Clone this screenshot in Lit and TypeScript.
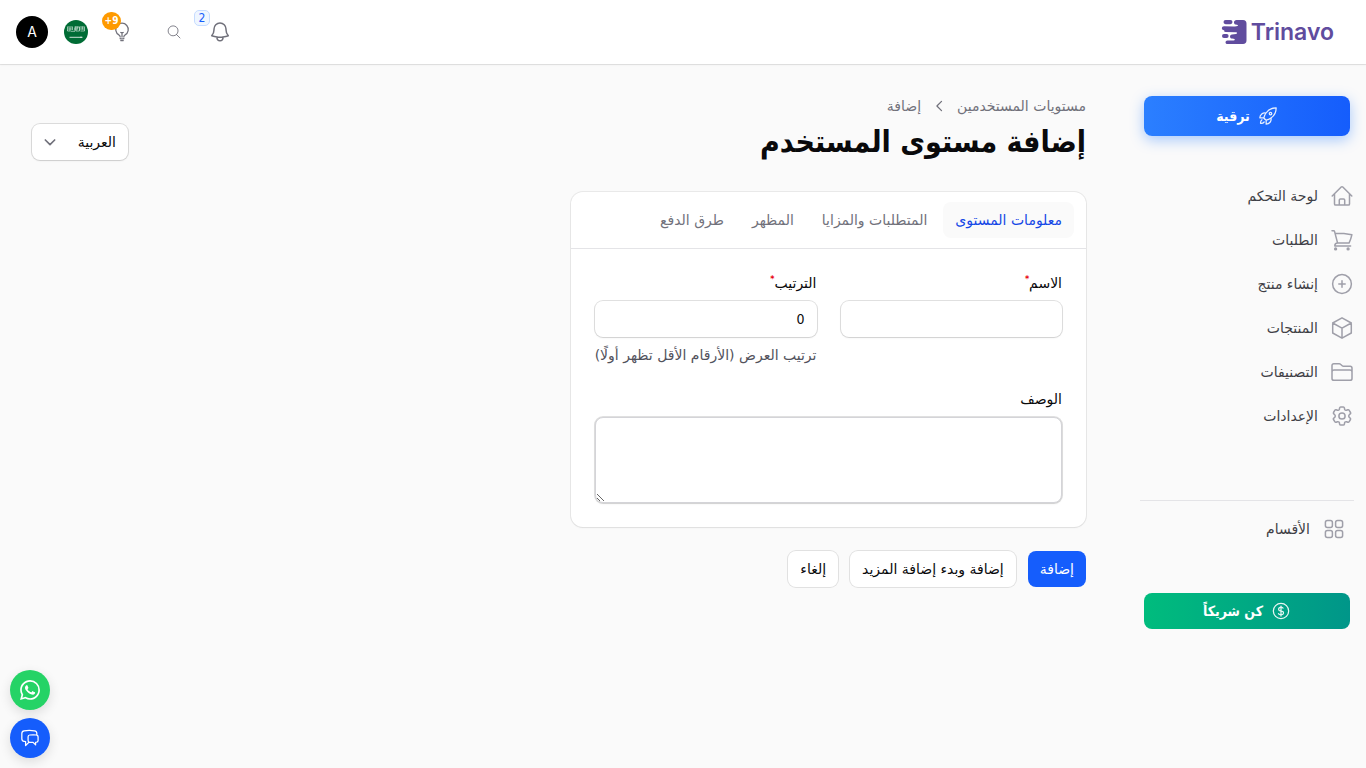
import { LitElement, html, css, svg } from "lit";
import { customElement, state } from "lit/decorators.js";

const icons = {
  home: svg`<path d="M2.2 12 11.2 3a1.13 1.13 0 0 1 1.6 0l9 9M4.5 9.8v10.1c0 .6.5 1.1 1.1 1.1h12.8c.6 0 1.1-.5 1.1-1.1V9.8M9.3 21v-4.9c0-.6.5-1.1 1.1-1.1h3.2c.6 0 1.1.5 1.1 1.1V21"/>`,
  cart: svg`<path d="M2 2.8h1.600c.5 0 .9.3 1 .8l3 11.500M4.900 5.300c6 0 11.600.4 17 1.400-.6 2.900-1.600 5.700-2.900 8.400H7.600M7.600 15.100c-1.700 0-2.800 1.300-2.800 2.800h15.800"/><circle cx="5.600" cy="20.900" r=".9" fill="currentColor"/><circle cx="18.100" cy="20.900" r=".9" fill="currentColor"/>`,
  plus: svg`<circle cx="12" cy="12" r="9.4"/><path d="M12 8.8v6.4M8.8 12h6.4"/>`,
  cube: svg`<path d="m21.3 7-9.3-5.2L2.7 7v10l9.3 5.2 9.3-5.2V7ZM2.7 7l9.3 5.2L21.3 7M12 12.2v10"/>`,
  folder: svg`<path d="M2 9.2V5.6c0-1 .8-1.9 1.9-1.9h5.3c.5 0 1 .2 1.3.5l1.7 1.6c.3.3.8.5 1.3.5h6.6c1.1 0 1.9.9 1.9 1.900v10.200c0 1.100-.8 1.900-1.900 1.900H3.900c-1.100 0-1.900-.8-1.900-1.900V9.200Zm0 2.200c.3-.9 1-1.400 1.900-1.400h16.200c.9 0 1.600.5 1.900 1.400"/>`,
  gear: svg`<path d="M9.6 3.9c.1-.5.6-.9 1.1-.9h2.6c.5 0 1 .4 1.1.9l.2 1.3c.1.4.3.7.7.9l.2.1c.3.2.7.2 1.1.1l1.2-.5c.5-.2 1.1 0 1.4.5l1.3 2.2c.3.5.2 1.1-.3 1.4l-1 .9c-.3.2-.4.6-.4 1v.4c0 .4.1.8.4 1l1 .9c.4.3.5.9.3 1.4l-1.3 2.2c-.3.5-.9.7-1.4.5l-1.2-.5c-.4-.1-.8-.1-1.1.1l-.2.1c-.4.2-.6.5-.7.9l-.2 1.3c-.1.5-.6.9-1.1.9h-2.6c-.5 0-1-.4-1.1-.9l-.2-1.3c-.1-.4-.3-.7-.7-.9l-.2-.1c-.3-.2-.7-.2-1.1-.1l-1.2.5c-.5.2-1.1 0-1.4-.5l-1.3-2.2c-.3-.5-.2-1.1.3-1.4l1-.9c.3-.2.4-.6.4-1v-.4c0-.4-.1-.8-.4-1l-1-.9c-.4-.3-.5-.9-.3-1.4l1.3-2.2c.3-.5.9-.7 1.4-.5l1.2.5c.4.1.8.1 1.1-.1l.2-.1c.4-.2.6-.5.7-.9l.2-1.3Z"/><circle cx="12" cy="12" r="3.1"/>`,
  grid: svg`<rect x="3.4" y="3.4" width="7" height="7" rx="2"/><rect x="13.6" y="3.4" width="7" height="7" rx="2"/><rect x="3.4" y="13.6" width="7" height="7" rx="2"/><rect x="13.6" y="13.6" width="7" height="7" rx="2"/>`,
  rocket: svg`<path d="M15.6 14.4a6 6 0 0 1-5.8 7.4v-4.8m5.8-2.6A15 15 0 0 0 21.8 2.2 15 15 0 0 0 9.6 8.4m6 6a15 15 0 0 1-5.8 2.6M9.6 8.4a6 6 0 0 0-7.4 5.8H7m2.6-5.8A15 15 0 0 0 7 14.2c0 .1 0 .2 0 .2a15 15 0 0 0 2.5 2.5h.3M4.8 16.6a4.5 4.5 0 0 0-1.7 4.3 4.5 4.5 0 0 0 4.3-1.7M16.5 9a1.5 1.5 0 1 1-3 0 1.5 1.5 0 0 1 3 0Z"/>`,
  dollar: svg`<path d="M12 6v12m-3-2.8.9.7c1.1.8 3 .8 4.2 0 1.2-.9 1.2-2.3 0-3.2-.6-.4-1.4-.7-2.1-.7-.7 0-1.4-.2-2-.6-1.1-.9-1.1-2.3 0-3.2 1.1-.9 2.9-.9 4 0l.4.3"/><circle cx="12" cy="12" r="9.2"/>`,
  bell: svg`<path d="M14.9 17.1c1.8-.2 3.7-.6 5.4-1.3A9 9 0 0 1 18 9.8V9A6 6 0 0 0 6 9v.8a9 9 0 0 1-2.3 6c1.7.6 3.5 1.1 5.4 1.3m5.8 0a24 24 0 0 1-5.8 0m5.8 0a3 3 0 1 1-5.8 0"/>`,
  search: svg`<path d="m21 21-5.2-5.2m0 0A7.5 7.5 0 1 0 5.2 5.2a7.5 7.5 0 0 0 10.6 10.6Z"/>`,
  bulb: svg`<path d="M12 18v-5.2m0 0a6 6 0 0 0 1.5-.2m-1.5.2a6 6 0 0 1-1.5-.2m3.8 7.4a12 12 0 0 1-4.6 0m3.8 2.4a14 14 0 0 1-3 0M14.2 18v-.2c0-1 .7-1.8 1.5-2.3a7.5 7.5 0 1 0-7.4 0c.8.5 1.5 1.3 1.5 2.3v.2"/>`,
  down: svg`<path d="m5 9 7 7 7-7"/>`,
  left: svg`<path d="m15 6.500-5.500 5.500 5.500 5.500"/>`,
  chat: svg`<path d="M20.2 8.5c.9.3 1.5 1.1 1.5 2.1v4.3c0 1.1-.8 2.1-2 2.2l-1 .1v3.1l-3-3a22 22 0 0 1-4.600-.2c-.3 0-.6-.1-.8-.2m9.900-8.400a2 2 0 0 0-.5-.1 48 48 0 0 0-8 0C10.500 8.500 9.700 9.400 9.700 10.600v4.300c0 .8.500 1.600 1.200 2M20.200 8.500V6.600c0-1.600-1.200-3-2.800-3.200a48 48 0 0 0-12.500 0C3.400 3.600 2.200 5 2.200 6.600v6.200c0 1.600 1.200 3 2.800 3.200l1.700.2V21l4.200-4.100"/>`,
};

const icon = (name: keyof typeof icons, cls = "i24") => html`<svg
  class="icon ${cls}" viewBox="0 0 24 24" aria-hidden="true">${icons[name]}</svg>`;

const base = css`
  * { box-sizing: border-box; }
  button, input, select, textarea { font: inherit; color: inherit; margin: 0; }
  button { border: 0; padding: 0; background: none; cursor: pointer; }
  a { color: inherit; text-decoration: none; }
  .icon {
    display: block; flex: none; fill: none; stroke: currentColor;
    stroke-width: 1.5; stroke-linecap: round; stroke-linejoin: round;
  }
  .i16 { width: 16px; height: 16px; }
  .i20 { width: 20px; height: 20px; }
  .i24 { width: 24px; height: 24px; }
`;

@customElement("top-bar")
class TopBar extends LitElement {
  static styles = [base, css`
    :host { display: block; }
    .bar {
      display: flex; align-items: center; justify-content: space-between;
      height: 64px; padding-inline: 32px 16px; background: #fff;
      box-shadow: 0 0 0 1px rgba(9, 9, 11, 0.08), 0 1px 2px rgba(0, 0, 0, 0.06);
    }
    .logo { display: flex; align-items: center; gap: 4px; direction: ltr; color: #604c9e; }
    .mark { width: 26px; height: 26px; fill: currentColor; }
    .word { font: 600 23px/32px Inter, sans-serif; }
    .tools { display: flex; align-items: center; gap: 16px; color: #71717b; }
    .tool { position: relative; display: grid; place-items: center; height: 36px; }
    .wide { width: 36px; }
    .thin { stroke-width: 1.3; }
    .count {
      position: absolute; top: -4px; right: 22px; width: 16px; height: 16px;
      border: 1px solid #c6dcff; border-radius: 5px; background: #eff6ff;
      color: #155dfc; font: 12px/14px "DejaVu Sans Condensed", sans-serif; text-align: center;
    }
    .tips {
      position: absolute; top: -2px; right: 19px; width: 19px; height: 18px;
      border-radius: 9px; background: #fe9a00; color: #fff;
      font: 700 10px/18px "DejaVu Sans Condensed", sans-serif; text-align: center;
    }
    .flag { display: block; width: 24px; height: 24px; }
    .avatar {
      width: 32px; height: 32px; border-radius: 50%; background: #000; color: #fff;
      font: 14px/32px Inter, sans-serif; text-align: center;
    }
  `];
  render() {
    return html`<header class="bar">
      <a class="logo" href="#" aria-label="Trinavo">
        <svg class="mark" viewBox="0 0 26 26" aria-hidden="true">
          <path d="M15.500 1H22c2.300 0 3.500 1.200 3.500 3.500v17c0 2.300-1.200 3.500-3.500 3.500H6.500c-2.600 0-2.600-3.600 0-3.600h6c1.700 0 1.700-1.400 0-1.600l-1.500-.2c-2.600-.2-2.600-4 0-4.200l4-.5c1.500-.3 1.500-1.400 0-1.700L4.500 12.900c-2-.3-2-1.500-.5-1.700H3c-2.800 0-2.800-3.900 0-3.900l9.500.1c1.500 0 3 .1 4-.3.800-.400.500-1.100-.5-1.300l-1.500-.3c-2.300-.5-2-4.500 1-4.500Z"/>
          <rect x="2.500" y="1" width="9" height="4.200" rx="2.100"/>
          <rect x="1" y="15" width="6.600" height="4" rx="2"/>
        </svg>
        <span class="word">Trinavo</span>
      </a>
      <div class="tools">
        <button class="tool" aria-label="الإشعارات">${icon("bell")}<span class="count">2</span></button>
        <button class="tool wide" aria-label="بحث">${icon("search", "i16 thin")}</button>
        <button class="tool wide" aria-label="نصائح">${icon("bulb", "i20")}<span class="tips">9+</span></button>
        <button aria-label="اللغة">
          <svg class="flag" viewBox="0 0 24 24" aria-hidden="true">
            <circle cx="12" cy="12" r="12" fill="#006c35"/>
            <path d="M3.500 6.500v4.500h2.500V7.500M6.500 11.300h4.500V6.500M8.500 6.500v3.500M12 6.500v4.500h3.500V7M13.700 6.500v3M16.500 11h4V6.500M18.300 6.500v3M4 9h4M10 9h3.500M15 9h5M4 7h4M11 7h9" fill="none" stroke="#fff" stroke-width=".7" opacity=".8"/>
            <path d="M5.500 17.300h13M17 16.600v1.400" stroke="#fff" stroke-width=".8"/>
          </svg>
        </button>
        <button class="avatar" aria-label="الحساب">A</button>
      </div>
    </header>`;
  }
}

@customElement("side-nav")
class SideNav extends LitElement {
  static styles = [base, css`
    :host { display: block; }
    .side { display: flex; flex-direction: column; padding-block: 32px; padding-inline: 12px 14px; }
    .cta {
      display: flex; align-items: center; justify-content: center; gap: 8px;
      margin-inline: 4px; border-radius: 8px; color: #fff; line-height: 20px;
      font-family: "DejaVu Sans Condensed", "DejaVu Sans", sans-serif; font-weight: 700;
    }
    .cta .icon { opacity: 0.9; }
    .upgrade {
      height: 40px; background: linear-gradient(to left, #155dfc, #2b7fff);
      box-shadow: 0 4px 14px rgba(43, 127, 255, 0.4);
    }
    .partner { height: 36px; margin-top: 42px; background: linear-gradient(to left, #009689, #00bc7d); }
    .list { display: flex; flex-direction: column; margin-top: 38px; padding-bottom: 62px; }
    .item {
      display: flex; align-items: center; gap: 12px; height: 44px;
      color: #3f3f46; line-height: 20px;
    }
    .item .icon { color: #9f9fa9; }
    .extra { border-top: 1px solid #e4e4e7; padding: 6px 8px 0; }
  `];
  private items: [keyof typeof icons, string][] = [
    ["home", "لوحة التحكم"], ["cart", "الطلبات"], ["plus", "إنشاء منتج"],
    ["cube", "المنتجات"], ["folder", "التصنيفات"], ["gear", "الإعدادات"],
  ];
  render() {
    return html`<aside class="side">
      <button class="cta upgrade">${icon("rocket", "i20")}<span>ترقية</span></button>
      <nav class="list">
        ${this.items.map(([name, label]) => html`<a class="item" href="#">${icon(name)}<span>${label}</span></a>`)}
      </nav>
      <div class="extra"><a class="item" href="#">${icon("grid")}<span>الأقسام</span></a></div>
      <button class="cta partner">${icon("dollar", "i20")}<span>كن شريكاً</span></button>
    </aside>`;
  }
}

@customElement("level-form")
class LevelForm extends LitElement {
  static styles = [base, css`
    :host { display: block; }
    .form { display: flex; flex-direction: column; gap: 24px; }
    .card {
      border-radius: 12px; background: #fff;
      box-shadow: 0 0 0 1px rgba(9, 9, 11, 0.07), 0 1px 2px rgba(0, 0, 0, 0.05);
    }
    .tabs { display: flex; gap: 4px; padding: 10px 12px; border-bottom: 1px solid #e4e4e7; }
    .tab { height: 36px; padding-inline: 12px; border-radius: 8px; color: #71717b; white-space: nowrap; }
    .tab[aria-selected="true"] { background: #fafafa; color: #1447e6; }
    .fields { display: grid; grid-template-columns: 1fr 1fr; gap: 24px; padding: 24px; }
    .field { display: flex; flex-direction: column; gap: 8px; min-width: 0; }
    .full { grid-column: 1 / -1; }
    .label { color: #09090b; line-height: 20px; }
    .req { color: #e7000b; font-size: 8px; font-weight: 700; line-height: 0; }
    .box {
      display: block; width: 100%; height: 36px; padding: 0 12px; border: 0;
      border-radius: 8px; background: #fff; color: #09090b; outline: none;
      font-family: "DejaVu Sans Condensed", "DejaVu Sans", sans-serif;
      box-shadow: 0 0 0 1px rgba(9, 9, 11, 0.12), 0 1px 2px rgba(0, 0, 0, 0.08);
    }
    .area { height: 86px; padding: 8px 12px; border: 1px solid #d4d4d8; resize: vertical; }
    .hint { margin: 0; color: #52525c; line-height: 20px; white-space: nowrap; }
    .actions { display: flex; gap: 12px; }
    .btn {
      height: 36px; padding-inline: 12px; border-radius: 8px; background: #fff;
      color: #09090b; white-space: nowrap;
      box-shadow: 0 0 0 1px rgba(9, 9, 11, 0.1);
    }
    .primary { background: #155dfc; color: #fff; box-shadow: none; }
  `];
  @state() private active = 0;
  private tabs = ["معلومات المستوى", "المتطلبات والمزايا", "المظهر", "طرق الدفع"];
  render() {
    return html`<form class="form" @submit=${(e: Event) => e.preventDefault()}>
      <section class="card">
        <div class="tabs" role="tablist">
          ${this.tabs.map((t, i) => html`<button type="button" class="tab" role="tab"
            aria-selected=${i === this.active ? "true" : "false"}
            @click=${() => (this.active = i)}>${t}</button>`)}
        </div>
        <div class="fields">
          <div class="field">
            <label class="label" for="name">الاسم<sup class="req">*</sup></label>
            <input class="box" id="name" type="text" />
          </div>
          <div class="field">
            <label class="label" for="order">الترتيب<sup class="req">*</sup></label>
            <input class="box" id="order" type="text" inputmode="numeric" value="0" />
            <p class="hint">ترتيب العرض (الأرقام الأقل تظهر أولًا)</p>
          </div>
          <div class="field full">
            <label class="label" for="about">الوصف</label>
            <textarea class="box area" id="about"></textarea>
          </div>
        </div>
      </section>
      <div class="actions">
        <button class="btn primary">إضافة</button>
        <button class="btn" type="button">إضافة وبدء إضافة المزيد</button>
        <button class="btn" type="button">إلغاء</button>
      </div>
    </form>`;
  }
}

@customElement("app-root")
class AppRoot extends LitElement {
  static styles = [base, css`
    :host {
      display: block; min-height: 100vh; background: #fafafa; color: #09090b;
      font: 14px/20px "DejaVu Sans", sans-serif;
    }
    .layout { display: grid; grid-template-columns: 240px minmax(0, 1fr); }
    .main { display: flex; flex-direction: column; gap: 32px; padding-block: 32px; padding-inline: 40px 32px; }
    .head { display: flex; justify-content: space-between; align-items: flex-end; }
    .titles { display: flex; flex-direction: column; gap: 8px; }
    .crumbs { display: flex; align-items: center; gap: 8px; color: #71717b; }
    .title {
      margin: 0; font: 700 30px/36px "DejaVu Sans Condensed", "DejaVu Sans", sans-serif;
    }
    .lang { display: grid; align-items: center; width: 96px; color: #52525c; }
    .lang > * { grid-area: 1 / 1; }
    .pick {
      appearance: none; width: 100%; height: 36px; padding: 0 12px; border: 0;
      border-radius: 8px; background: #fff; color: #09090b;
      box-shadow: 0 0 0 1px rgba(9, 9, 11, 0.12), 0 1px 2px rgba(0, 0, 0, 0.08);
    }
    .chev { justify-self: end; margin-inline-end: 10px; stroke-width: 2.500; color: #71717b; pointer-events: none; }
    .columns { display: grid; grid-template-columns: 1fr 1fr; gap: 24px; }
    .float { position: fixed; left: 10px; bottom: 10px; display: flex; flex-direction: column; gap: 8px; }
    .fab {
      display: grid; place-items: center; width: 40px; height: 40px; border-radius: 50%;
      color: #fff; box-shadow: 0 4px 12px rgba(0, 0, 0, 0.12);
    }
    .wa { background: #25d366; }
    .talk { background: #155dfc; }
    .solid { fill: currentColor; stroke: none; }
  `];
  render() {
    return html`<div dir="rtl" lang="ar">
      <top-bar></top-bar>
      <div class="layout">
        <side-nav></side-nav>
        <main class="main">
          <div class="head">
            <div class="titles">
              <nav class="crumbs">
                <a href="#">مستويات المستخدمين</a>${icon("left", "i20")}<span>إضافة</span>
              </nav>
              <h1 class="title">إضافة مستوى المستخدم</h1>
            </div>
            <div class="lang">
              <select class="pick" aria-label="لغة المحتوى"><option>العربية</option></select>
              ${icon("down", "i16 chev")}
            </div>
          </div>
          <div class="columns"><level-form></level-form></div>
        </main>
      </div>
      <div class="float">
        <a class="fab wa" href="#" aria-label="واتساب">
          <svg class="icon i20 solid" viewBox="0 0 24 24" aria-hidden="true"><path d="M17.472 14.382c-.297-.149-1.758-.867-2.030-.967-.273-.099-.471-.148-.670.150-.197.297-.767.966-.940 1.164-.173.199-.347.223-.644.075-.297-.150-1.255-.463-2.390-1.475-.883-.788-1.480-1.761-1.653-2.059-.173-.297-.018-.458.130-.606.134-.133.298-.347.446-.520.149-.174.198-.298.298-.497.099-.198.050-.371-.025-.520-.075-.149-.669-1.612-.916-2.207-.242-.579-.487-.500-.669-.510-.173-.008-.371-.010-.570-.010-.198 0-.520.074-.792.372-.272.297-1.040 1.016-1.040 2.479 0 1.462 1.065 2.875 1.213 3.074.149.198 2.096 3.200 5.077 4.487.709.306 1.262.489 1.694.625.712.227 1.360.195 1.871.118.571-.085 1.758-.719 2.006-1.413.248-.694.248-1.289.173-1.413-.074-.124-.272-.198-.570-.347m-5.421 7.403h-.004a9.870 9.870 0 0 1-5.031-1.378l-.361-.214-3.741.982.998-3.648-.235-.374a9.860 9.860 0 0 1-1.510-5.260c.001-5.450 4.436-9.884 9.888-9.884 2.640 0 5.122 1.030 6.988 2.898a9.825 9.825 0 0 1 2.893 6.994c-.003 5.450-4.437 9.884-9.885 9.884m8.413-18.297A11.815 11.815 0 0 0 12.050 0C5.495 0 .160 5.335.157 11.892c0 2.096.547 4.142 1.588 5.945L.057 24l6.305-1.654a11.882 11.882 0 0 0 5.683 1.448h.005c6.554 0 11.890-5.335 11.893-11.893a11.821 11.821 0 0 0-3.480-8.413Z"/></svg>
        </a>
        <button class="fab talk" aria-label="محادثة">${icon("chat", "i20")}</button>
      </div>
    </div>`;
  }
}
